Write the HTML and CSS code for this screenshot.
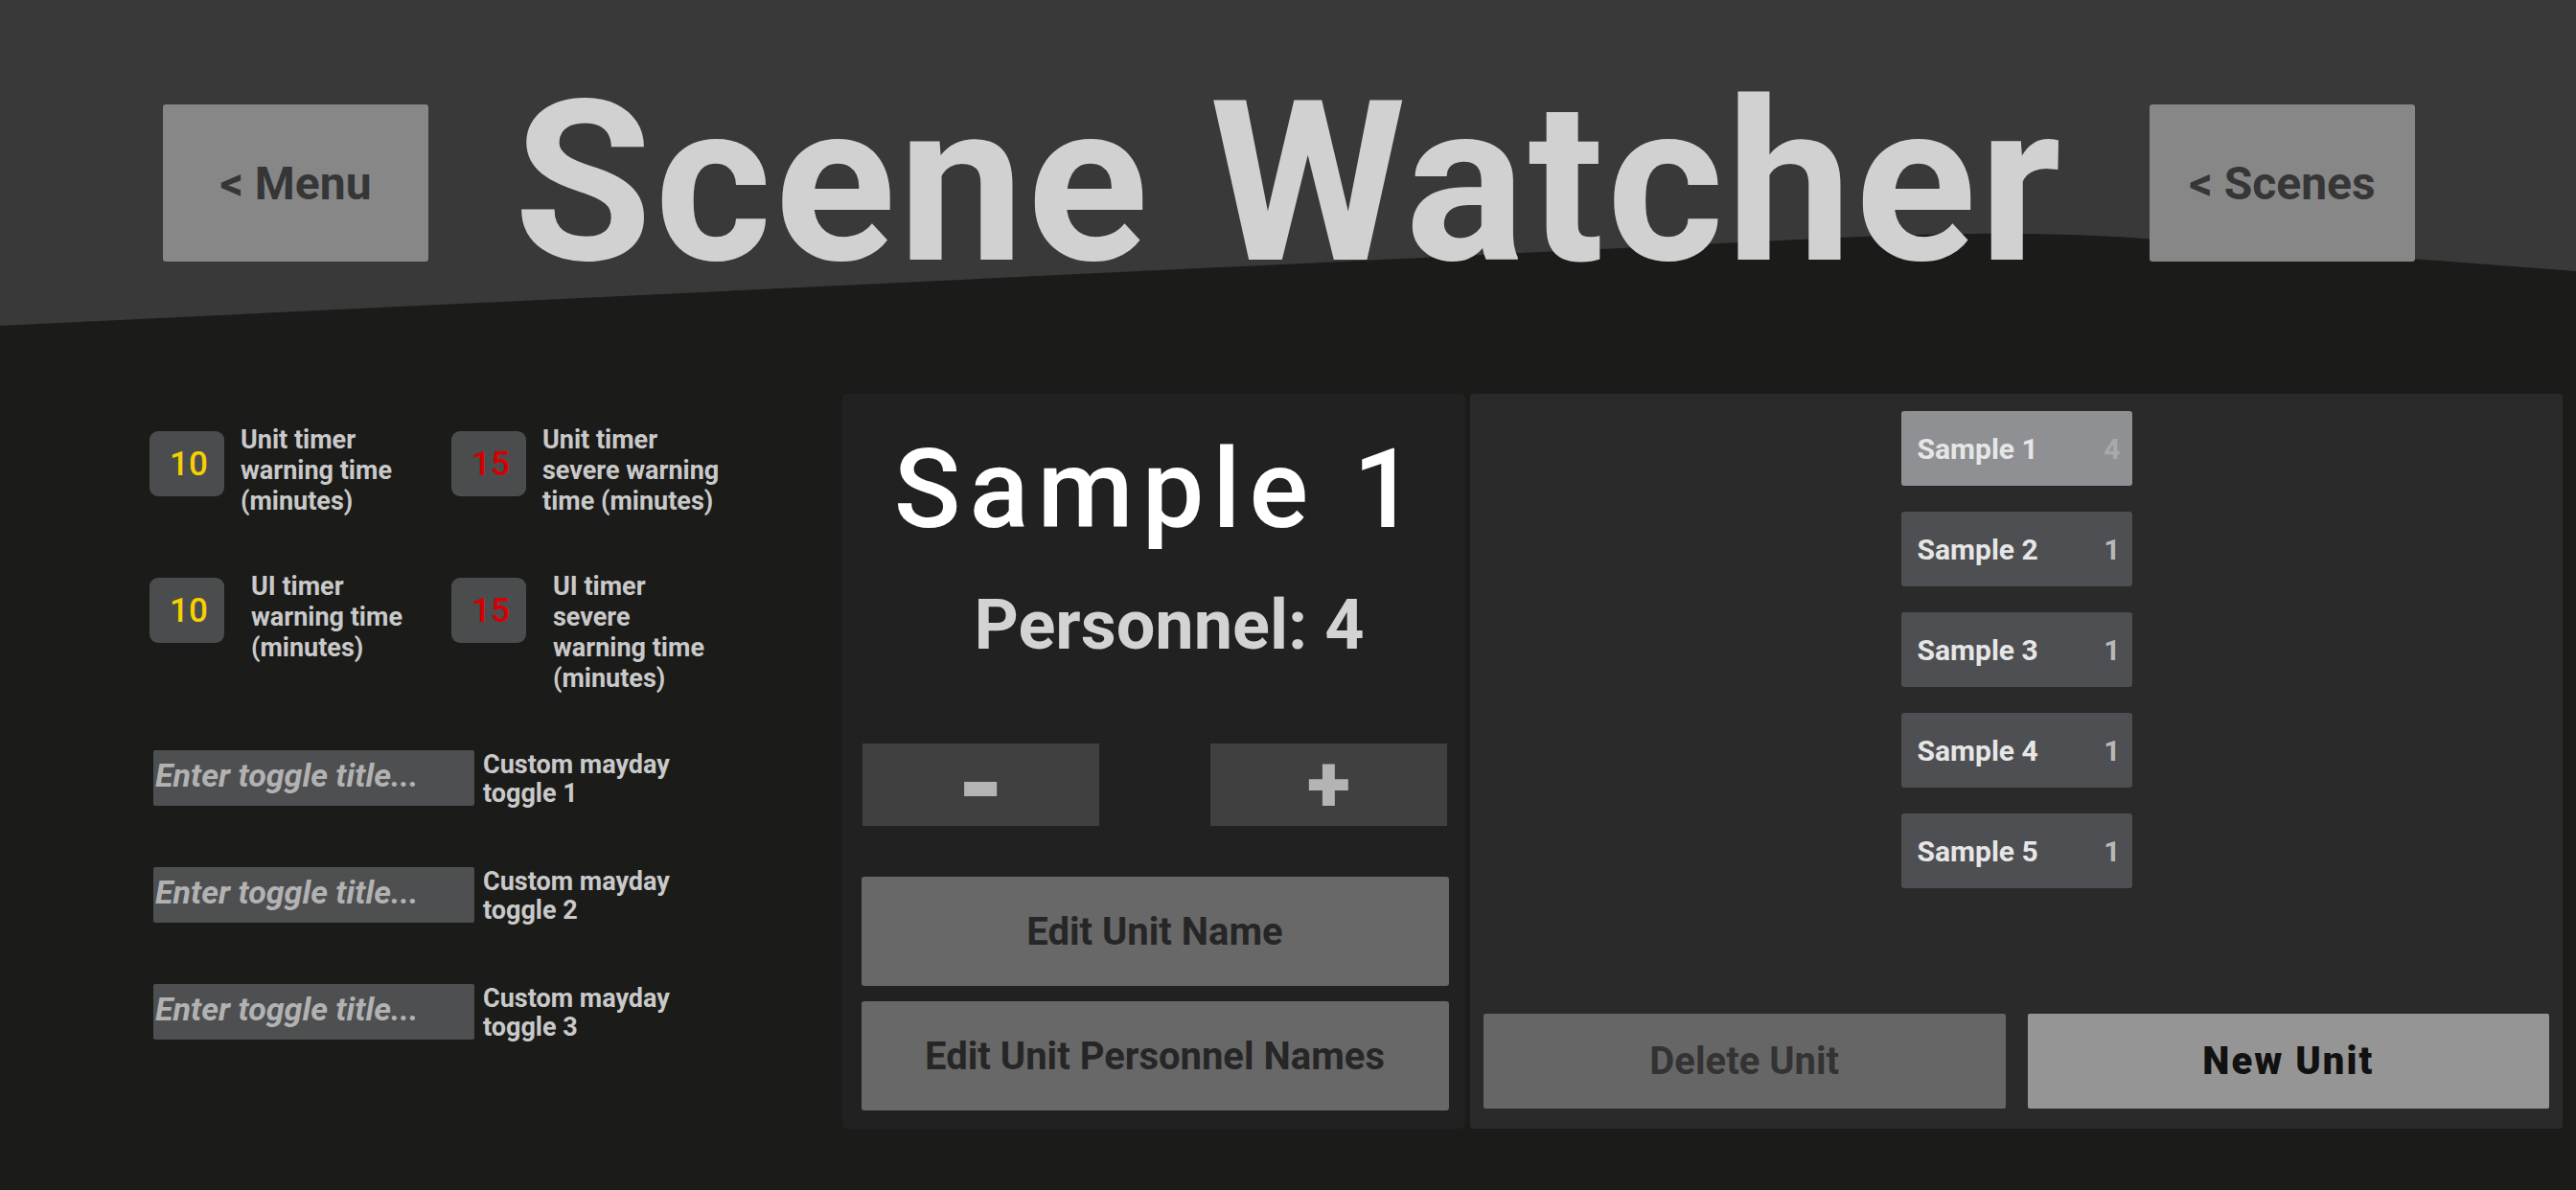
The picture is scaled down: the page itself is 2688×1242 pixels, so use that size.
FILE: index.html
```html
<!DOCTYPE html>
<html lang="en">

<head>
    <meta charset="UTF-8">
    <meta name="viewport" content="width=device-width, initial-scale=1.0">
    <title>Scene Watcher</title>
    <link rel="stylesheet" href="styles.css">
</head>

<body>
    <header class="top-bar">
        <button class="nav-btn">&lt; Menu</button>
        <h1 class="title">Scene Watcher</h1>
        <button class="nav-btn">&lt; Scenes</button>
    </header>

    <main class="workspace">
        <!-- timer thresholds and mayday toggles -->
        <section class="settings">
            <div class="timers">
                <div class="timer">
                    <div class="timer__value warn">10</div>
                    <p class="timer__label">Unit timer<br>warning time<br>(minutes)</p>
                </div>
                <div class="timer">
                    <div class="timer__value severe">15</div>
                    <p class="timer__label">Unit timer<br>severe warning<br>time (minutes)</p>
                </div>
                <div class="timer timer--ui">
                    <div class="timer__value warn">10</div>
                    <p class="timer__label">UI timer<br>warning time<br>(minutes)</p>
                </div>
                <div class="timer timer--ui">
                    <div class="timer__value severe">15</div>
                    <p class="timer__label">UI timer<br>severe<br>warning time<br>(minutes)</p>
                </div>
            </div>

            <div class="toggles">
                <div class="toggle">
                    <input type="text" placeholder="Enter toggle title...">
                    <p class="toggle__label">Custom mayday<br>toggle 1</p>
                </div>
                <div class="toggle">
                    <input type="text" placeholder="Enter toggle title...">
                    <p class="toggle__label">Custom mayday<br>toggle 2</p>
                </div>
                <div class="toggle">
                    <input type="text" placeholder="Enter toggle title...">
                    <p class="toggle__label">Custom mayday<br>toggle 3</p>
                </div>
            </div>
        </section>

        <!-- selected unit -->
        <section class="unit-card">
            <h2 class="unit-card__name">Sample 1</h2>
            <p class="unit-card__count">Personnel: 4</p>
            <div class="unit-card__steppers">
                <button class="step-btn minus">-</button>
                <button class="step-btn">+</button>
            </div>
            <button class="edit-btn">Edit Unit Name</button>
            <button class="edit-btn">Edit Unit Personnel Names</button>
        </section>

        <!-- all units in the scene -->
        <section class="unit-list">
            <ul class="units">
                <li class="unit active"><span>Sample 1</span><span class="unit__count">4</span></li>
                <li class="unit"><span>Sample 2</span><span class="unit__count">1</span></li>
                <li class="unit"><span>Sample 3</span><span class="unit__count">1</span></li>
                <li class="unit"><span>Sample 4</span><span class="unit__count">1</span></li>
                <li class="unit"><span>Sample 5</span><span class="unit__count">1</span></li>
            </ul>
            <div class="unit-list__actions">
                <button class="action-btn delete">Delete Unit</button>
                <button class="action-btn new">New Unit</button>
            </div>
        </section>
    </main>
</body>

</html>
```

FILE: styles.css
```css
* {
    margin: 0;
    padding: 0;
    box-sizing: border-box;
}

body {
    width: 2688px;
    height: 1242px;
    overflow: hidden;
    background: #1b1b19;
    font-family: Roboto, 'Noto Sans', sans-serif;
}

/* lighter slanted band behind the header */
body::before {
    content: "";
    position: absolute;
    top: 0;
    left: 0;
    width: 2688px;
    height: 345px;
    background: #393939;
    clip-path: path('M0,0 H2688 V283 L2250,250 Q2107,238 1900,249 L0,340 Z');
    z-index: -1;
}

button {
    font-family: inherit;
    border: none;
    cursor: pointer;
}

.top-bar {
    display: flex;
    justify-content: space-between;
    align-items: center;
    padding: 109px 168px 0 170px;
}

.nav-btn {
    width: 277px;
    height: 164px;
    background: #878787;
    border-radius: 3px;
    color: #363636;
    font-size: 48px;
    font-weight: 700;
}

.title {
    font-size: 234px;
    line-height: 164px;
    font-weight: 700;
    letter-spacing: 3px;
    color: #d1d1d1;
}

.workspace {
    display: flex;
    margin-top: 138px;
}

/* left column */
.settings {
    width: 879px;
    padding: 32px 0 0 156px;
    color: #c9c9c9;
    font-size: 27px;
    font-weight: 700;
}

.timers {
    display: grid;
    grid-template-columns: 315px 315px;
    row-gap: 57px;
}

.timer {
    display: flex;
    align-items: flex-start;
    gap: 17px;
}

.timer--ui {
    gap: 28px;
}

.timer__value {
    width: 78px;
    height: 68px;
    margin-top: 7px;
    flex-shrink: 0;
    display: flex;
    align-items: center;
    justify-content: center;
    padding-left: 4px;
    background: #4b4c4e;
    border-radius: 9px;
    font-size: 35px;
    font-weight: 500;
}

.warn {
    color: #f7d000;
}

.severe {
    color: #d60000;
}

.timer__label {
    line-height: 32px;
}

.toggles {
    display: flex;
    flex-direction: column;
    gap: 62px;
    margin-top: 59px;
}

.toggle {
    display: flex;
    align-items: flex-start;
    gap: 9px;
    padding-left: 4px;
}

.toggle input {
    width: 335px;
    height: 58px;
    padding: 0 0 6px 2px;
    border: none;
    border-radius: 2px;
    background: #4e4f51;
    color: #d0d0d0;
    font-family: inherit;
    font-size: 34px;
    font-weight: 700;
    font-style: italic;
}

.toggle input::placeholder {
    color: #b2b2b2;
}

.toggle input:focus {
    outline: none;
}

.toggle__label {
    line-height: 30px;
}

/* middle card */
.unit-card {
    width: 650px;
    height: 767px;
    padding: 42px 19px 0 21px;
    background: #212121;
    border-radius: 4px;
    display: flex;
    flex-direction: column;
    align-items: center;
}

.unit-card__name {
    padding-left: 9px;
    font-size: 115px;
    line-height: 115px;
    font-weight: 500;
    letter-spacing: 9px;
    color: #ffffff;
}

.unit-card__count {
    margin-top: 49px;
    padding-left: 30px;
    font-size: 72px;
    line-height: 72px;
    font-weight: 700;
    color: #d3d3d3;
}

.unit-card__steppers {
    width: 100%;
    display: flex;
    justify-content: space-between;
    margin-top: 87px;
}

.step-btn {
    width: 247px;
    height: 86px;
    background: #404040;
    color: #b4b4b4;
    font-size: 84px;
    line-height: 86px;
    font-weight: 900;
}

.step-btn.minus {
    font-size: 116px;
    line-height: 80px;
}

.edit-btn {
    width: 613px;
    height: 114px;
    margin-top: 53px;
    background: #686868;
    border-radius: 3px;
    color: #262626;
    font-size: 40px;
    font-weight: 700;
}

.edit-btn + .edit-btn {
    margin-top: 16px;
}

/* right list */
.unit-list {
    width: 1140px;
    height: 767px;
    margin-left: 5px;
    padding: 18px 14px 21px;
    background: #2a2a2a;
    border-radius: 4px;
    display: flex;
    flex-direction: column;
    justify-content: space-between;
}

.units {
    list-style: none;
    display: flex;
    flex-direction: column;
    align-items: center;
    gap: 27px;
}

.unit {
    width: 241px;
    height: 78px;
    display: flex;
    align-items: center;
    justify-content: space-between;
    padding: 0 12px 0 17px;
    background: #4e4f52;
    border-radius: 3px;
    color: #e6e6e6;
    font-size: 30px;
    font-weight: 700;
}

.unit__count {
    color: #b8b8b8;
}

.unit.active {
    background: #8e9093;
}

.unit.active .unit__count {
    color: #a9a9a9;
}

.unit-list__actions {
    display: flex;
    gap: 23px;
}

.action-btn {
    flex: 1;
    height: 99px;
    border-radius: 2px;
    font-size: 40px;
    font-weight: 700;
}

.delete {
    background: #666666;
    color: #333333;
}

.new {
    background: #959595;
    color: #111111;
    font-weight: 900;
    letter-spacing: 2px;
}
```
